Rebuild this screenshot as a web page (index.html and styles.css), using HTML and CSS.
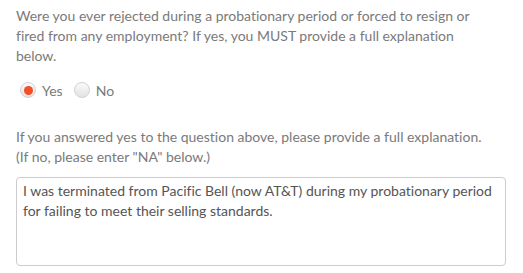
FILE: index.html
```html
<!DOCTYPE html>
<html lang="en">
<head>
<meta charset="utf-8">
<title>Employment question</title>
<link rel="stylesheet" href="styles.css">
</head>
<body>
<form class="form">
  <p class="question first">Were you ever rejected during a probationary period or forced to resign or<br>fired from any employment? If yes, you MUST provide a full explanation<br>below.</p>
  <div class="radios">
    <label class="radio"><span class="dot checked"></span>Yes</label>
    <label class="radio"><span class="dot"></span>No</label>
  </div>
  <p class="question second">If you answered yes to the question above, please provide a full explanation.<br>(If no, please enter "NA" below.)</p>
  <div class="textarea">I was terminated from Pacific Bell (now AT&amp;T) during my probationary period for failing to meet their selling standards.</div>
</form>
</body>
</html>
```
FILE: styles.css
```css
html, body { margin: 0; padding: 0; background: #fff; }
body { font-family: "Lato", "Liberation Sans", sans-serif; font-size: 14px; color: #7a7a7a; font-variant-ligatures: none; }
.form { padding: 6px 17px 0 16px; }
.question { margin: 0; line-height: 20px; }
.radios { display: flex; align-items: center; gap: 11px; margin-top: 14px; height: 20px; padding-left: 4px; }
.radio { display: flex; align-items: center; gap: 6px; }
.dot { width: 14px; height: 14px; border-radius: 50%; border: 1px solid #d2d2d2; background: linear-gradient(#fbfbfb, #e2e2e2); display: flex; align-items: center; justify-content: center; }
.dot.checked::after { content: ""; width: 9px; height: 9px; border-radius: 50%; background: #f0502a; }
.second { margin-top: 27px; }
.textarea { margin-top: 10px; height: 79px; border: 1px solid #cccccc; border-radius: 4px; padding: 3px 6px 5px; color: #555; line-height: 20px; }
```
